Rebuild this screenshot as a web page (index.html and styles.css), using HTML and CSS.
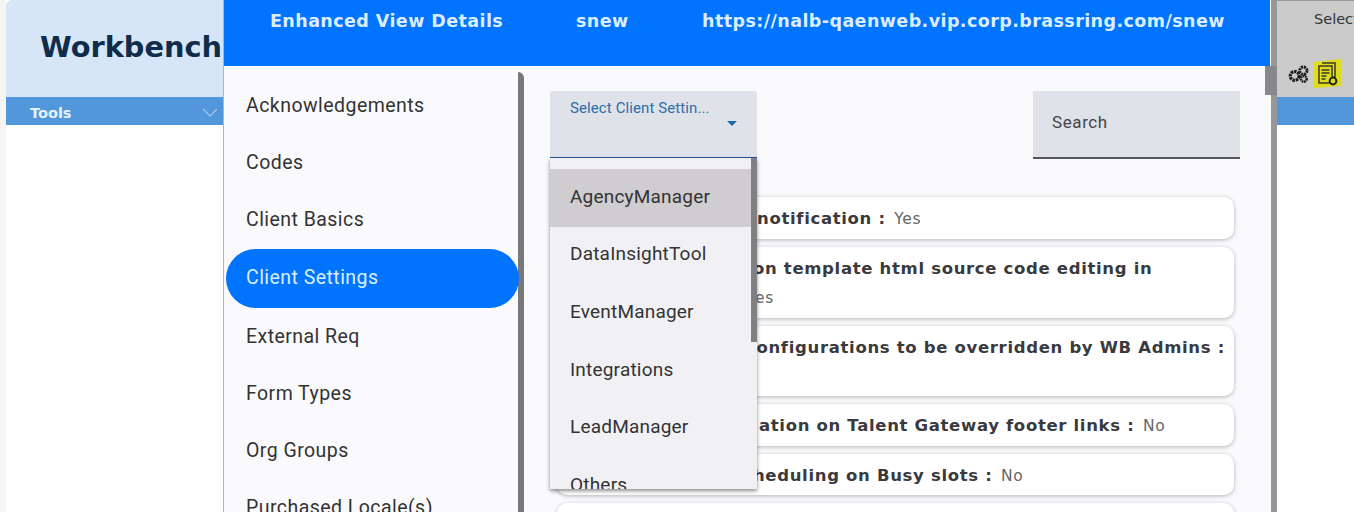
FILE: index.html
```html
<!DOCTYPE html>
<html lang="en">
<head>
<meta charset="utf-8">
<title>Workbench</title>
<link rel="stylesheet" href="styles.css">
</head>
<body>
<div class="page">
  <header class="top">
    <div class="brand"><h1>Workbench</h1></div>
    <div class="spacer"></div>
    <div class="client-box">
      <div class="client-label">Select</div>
      <div class="tool-icons">
        <svg class="gears" viewBox="0 0 24 20" width="24" height="20">
          <circle cx="7" cy="12" r="4.600" fill="none" stroke="#1c1c1c" stroke-width="3.400" stroke-dasharray="2.600 .8"/>
          <circle cx="16" cy="6.500" r="3.800" fill="none" stroke="#1c1c1c" stroke-width="3" stroke-dasharray="2.200 .8"/>
          <circle cx="16.500" cy="15" r="3" fill="none" stroke="#1c1c1c" stroke-width="2.600" stroke-dasharray="1.800 .7"/>
        </svg>
        <svg class="doc" viewBox="0 0 27 29" width="27" height="29">
          <path d="M0 3l27-3v27l-27 2z" fill="#e0dc1c"/>
          <path d="M8 4h13v16M5 7h13v17H5z" fill="none" stroke="#3a3a2a" stroke-width="1.500"/>
          <path d="M7.500 11h8M7.500 14h8M7.500 17h5M7.500 20h4" stroke="#3a3a2a" stroke-width="1.300"/>
          <circle cx="19" cy="22" r="3.400" fill="#e0dc1c" stroke="#222" stroke-width="2"/>
        </svg>
      </div>
    </div>
  </header>
  <nav class="bar">
    <div class="bar-tools"><span>Tools</span>
      <svg viewBox="0 0 16 10" width="16" height="10"><path d="M1 1l7 7 7-7" fill="none" stroke="#a8c8ea" stroke-width="1.200"/></svg>
    </div>
  </nav>
  <div class="content"></div>

  <section class="modal">
    <div class="modal-head">
      <span class="h-title">Enhanced View Details</span>
      <span class="h-client">snew</span>
      <span class="h-url">https://nalb-qaenweb.vip.corp.brassring.com/snew</span>
    </div>
    <div class="modal-thumb"></div>
    <div class="modal-body">
      <aside class="side">
        <ul class="side-list">
          <li>Acknowledgements</li>
          <li>Codes</li>
          <li>Client Basics</li>
          <li class="active">Client Settings</li>
          <li>External Req</li>
          <li>Form Types</li>
          <li>Org Groups</li>
          <li>Purchased Locale(s)</li>
        </ul>
      </aside>
      <main class="main">
        <div class="controls">
          <div class="select">
            <span class="select-label">Select Client Settin...</span>
            <span class="select-arrow"></span>
          </div>
          <div class="search">Search</div>
        </div>
        <div class="cards">
          <div class="card c1"><b>notification :</b> Yes</div>
          <div class="card c2"><b>on template html source code editing in</b><br><span class="tail">Yes</span></div>
          <div class="card c3"><b>configurations to be overridden by WB Admins :</b><br><span class="tail-hidden">No</span></div>
          <div class="card c4"><b>ation on Talent Gateway footer links :</b> No</div>
          <div class="card c5"><b>scheduling on Busy slots :</b> No</div>
          <div class="card c6"></div>
        </div>
        <div class="menu">
          <div class="menu-thumb"></div>
          <ul class="menu-list">
            <li class="hover">AgencyManager</li>
            <li>DataInsightTool</li>
            <li>EventManager</li>
            <li>Integrations</li>
            <li>LeadManager</li>
            <li>Others</li>
          </ul>
        </div>
      </main>
    </div>
  </section>
</div>
</body>
</html>
```
FILE: styles.css
```css
* { box-sizing: border-box; }
html, body { margin: 0; padding: 0; height: 100%; overflow: hidden; background: #fff; }
ul { list-style: none; margin: 0; padding: 0; }

.page { position: relative; width: 1354px; height: 512px; overflow: hidden; background: #f7f5f4; padding-left: 6px; display: flex; flex-direction: column; }

.top { display: flex; height: 97px; flex: none; background: #fff; }
.brand { width: 271px; background: #d6e6f6; border-top-left-radius: 6px; padding: 31px 0 0 34px; flex: none; }
.brand h1 { margin: 0; font: bold 28.800px/32px "DejaVu Sans", sans-serif; color: #0f2c4a; white-space: nowrap; }
.spacer { flex: 1; }
.client-box { width: 77px; flex: none; background: #cbcbcb; border-top: 1px solid #999; padding: 10px 0 0 0; overflow: hidden; }
.client-label { font: 14.500px/17px "DejaVu Sans", sans-serif; color: #333; padding-left: 37px; white-space: nowrap; }
.tool-icons { display: flex; align-items: flex-start; gap: 3px; margin-top: 31px; padding-left: 11px; }
.gears { width: 23px; height: 20px; flex: none; margin-top: 5px; }
.doc { width: 27px; height: 29px; flex: none; }

.bar { height: 28px; background: #5296dc; flex: none; }
.bar-tools { width: 220px; height: 28px; display: flex; align-items: center; justify-content: space-between; padding: 3px 8px 0 24px; font: bold 14.500px/26px "DejaVu Sans", sans-serif; color: #e6f0fb; }
.content { flex: 1; background: #fff; }

.modal { position: absolute; left: 223px; top: 0; width: 1054px; height: 512px; display: flex; flex-direction: column; background: #fafafc; border-left: 1px solid #b5b5b8; border-right: 6px solid #97979a; }
.modal-head { height: 66px; margin-right: 1px; background: #0073ff; display: flex; padding: 9px 0 0 46px; font: bold 17.500px/24px "DejaVu Sans", sans-serif; color: #dbeeff; white-space: nowrap; flex: none; letter-spacing: .42px; }
.h-title { width: 306px; }
.h-client { width: 126px; }
.modal-thumb { position: absolute; right: -6px; top: 66px; width: 12px; height: 29px; background: #88888b; }
.modal-body { flex: 1; display: flex; min-height: 0; }

.side { width: 301px; flex: none; position: relative; padding-top: 11px; }
.side::after { content: ""; position: absolute; right: 1px; top: 6px; bottom: 0; width: 6px; background: #77777c; border-top-right-radius: 6px; }
.side-list li { height: 57.300px; padding-left: 22px; display: flex; align-items: center; font: 19.500px/24px Roboto, sans-serif; color: #333; white-space: nowrap; letter-spacing: .45px; margin-right: 6px; }
.side-list li.active { height: 59px; margin-left: 2px; padding-left: 20px; background: #0073ff; color: #dbeeff; border-radius: 30px; position: relative; z-index: 1; }

.main { flex: 1; position: relative; padding: 25px 0 0 25px; min-width: 0; }
.controls { display: flex; justify-content: space-between; width: 690px; height: 68px; }
.select { width: 207px; height: 68px; background: #e0e2ea; border-bottom: 2px solid #1f5c99; border-radius: 3px 3px 0 0; padding: 9px 0 0 20px; position: relative; }
.select-label { display: block; font: 15px/17px Roboto, sans-serif; letter-spacing: .1px; color: #2d6da8; white-space: nowrap; }
.select-arrow { position: absolute; left: 177px; top: 30px; width: 0; height: 0; border-left: 5px solid transparent; border-right: 5px solid transparent; border-top: 5px solid #1f6aa8; }
.search { width: 207px; height: 68px; background: #e0e2ea; border-bottom: 2px solid #55565c; padding: 21px 0 0 19px; font: 17px/20px Roboto, sans-serif; letter-spacing: .6px; color: #444; }

.cards { display: flex; flex-direction: column; gap: 8px; width: 677px; margin: 38px 0 0 7px; }
.card { background: #fff; border-radius: 10px; box-shadow: 0 1px 4px rgba(0,0,0,.28); height: 42px; padding: 10px 8px 0 200px; font: 15.500px/24px "DejaVu Sans", sans-serif; letter-spacing: .6px; color: #666; white-space: nowrap; flex: none; }
.card b { color: #3a3a3e; font-size: 16.500px; letter-spacing: .67px; margin-right: 3px; }
.c2 { height: 71px; padding-left: 196px; line-height: 29px; padding-top: 7px; }
.c3 { height: 70px; padding-left: 189px; line-height: 29px; padding-top: 7px; }
.c4 { padding-left: 202px; }
.c5 { padding-left: 175px; height: 41px; }
.c6 { height: 40px; }
.tail { margin-left: -6px; }
.tail-hidden { margin-left: -30px; }

.menu { position: absolute; left: 25px; top: 92px; width: 207px; height: 331px; background: #f1f1f5; box-shadow: 0 2px 4px rgba(0,0,0,.45); overflow: hidden; padding-top: 11px; }
.menu-thumb { position: absolute; right: 0; top: 0; width: 6px; height: 184px; background: #808084; }
.menu-list li { height: 57.600px; padding: 0 0 2px 20px; display: flex; align-items: center; font: 19px/24px Roboto, sans-serif; letter-spacing: .2px; color: #333; white-space: nowrap; }
.menu-list li.hover { background: #cfcdd0; }
```
